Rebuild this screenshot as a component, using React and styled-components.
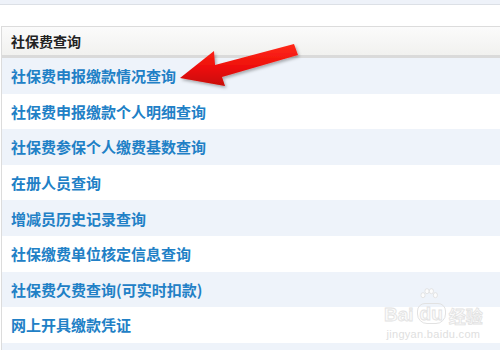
import styled, { createGlobalStyle } from 'styled-components';

const GlobalStyle = createGlobalStyle`
  html, body {
    margin: 0;
    padding: 0;
    background: #fff;
    overflow: hidden;
  }
  body {
    font-family: "Noto Sans CJK SC", "Noto Sans", sans-serif;
  }
`;

const links = [
  '社保费申报缴款情况查询',
  '社保费申报缴款个人明细查询',
  '社保费参保个人缴费基数查询',
  '在册人员查询',
  '增减员历史记录查询',
  '社保缴费单位核定信息查询',
  '社保费欠费查询(可实时扣款)',
  '网上开具缴款凭证',
  '',
];

function App() {
  return (
    <>
      <GlobalStyle />
      <StPage>
        <StTopStrip />
        <StPanel>
          <StHeader>社保费查询</StHeader>
          <StList>
            {links.map((text, i) => (
              <StRow key={i} striped={i % 2 === 0}>
                {text && <StLink href="#">{text}</StLink>}
              </StRow>
            ))}
          </StList>
        </StPanel>
        <StArrow width="130" height="50" viewBox="178 42 130 50">
          <defs>
            <linearGradient id="arrowFill" x1="0" y1="0" x2="0" y2="1">
              <stop offset="0" stopColor="#ff2a1a" />
              <stop offset="0.55" stopColor="#ee0f0a" />
              <stop offset="1" stopColor="#c80806" />
            </linearGradient>
            <filter id="arrowShadow" x="-10%" y="-20%" width="130%" height="160%">
              <feDropShadow dx="1.5" dy="2" stdDeviation="1.5" floodColor="#000" floodOpacity="0.3" />
            </filter>
          </defs>
          <polygon
            points="180,78 214,51 215,65 294,44 298,55 222,77 225,86"
            fill="url(#arrowFill)"
            filter="url(#arrowShadow)"
          />
        </StArrow>
        <StWatermark>
          <StMarkTop>
            <span>Bai</span>
            <StDuWrap>
              <StPaw viewBox="0 0 24 20">
                <ellipse cx="4.5" cy="9" rx="2.6" ry="3.2" />
                <ellipse cx="9.5" cy="4" rx="2.6" ry="3.2" />
                <ellipse cx="15" cy="4" rx="2.6" ry="3.2" />
                <ellipse cx="20" cy="9" rx="2.6" ry="3.2" />
              </StPaw>
              <StMarkDu>du</StMarkDu>
            </StDuWrap>
            <StMarkCn>经验</StMarkCn>
          </StMarkTop>
          <StMarkUrl>jingyan.baidu.com</StMarkUrl>
        </StWatermark>
      </StPage>
    </>
  );
}

export default App;

const StPage = styled.div`
  position: relative;
  width: 500px;
  height: 350px;
  overflow: hidden;
`;

const StTopStrip = styled.div`
  height: 4px;
  background-color: #eef2f9;
  border-bottom: 1px solid #dce0e6;
  margin-bottom: 21px;
`;

const StPanel = styled.div`
  margin-left: 1px;
  border: 1px solid #dcdcdc;
  border-right: none;
  border-bottom: none;
`;

const StHeader = styled.div`
  height: 28px;
  display: flex;
  align-items: center;
  padding-left: 9px;
  font-size: 14px;
  font-weight: 700;
  color: #222;
  background: linear-gradient(#fbfbfb, #f1f1ef);
  border-bottom: 3px solid #dadada;
`;

const StList = styled.div`
  display: flex;
  flex-direction: column;
`;

const StRow = styled.div`
  height: 35.6px;
  box-sizing: border-box;
  display: flex;
  align-items: center;
  padding-left: 9px;
  background-color: ${({ striped }) => (striped ? '#eef3fa' : '#ffffff')};
`;

const StLink = styled.a`
  font-size: 15px;
  font-weight: 700;
  color: #2180c6;
  text-decoration: none;
`;

const StArrow = styled.svg`
  position: absolute;
  left: 178px;
  top: 42px;
  overflow: visible;
`;

const StWatermark = styled.div`
  position: absolute;
  left: 384px;
  top: 303px;
  display: flex;
  flex-direction: column;
  align-items: center;
  pointer-events: none;
`;

const StMarkTop = styled.div`
  display: flex;
  align-items: flex-end;
  gap: 3px;
  font-family: "Liberation Sans", sans-serif;
  font-size: 19px;
  font-weight: 700;
  color: #fbfbfb;
  -webkit-text-stroke: 0.8px #e2e2e2;
  line-height: 1;
`;

const StDuWrap = styled.span`
  position: relative;
  display: flex;
  justify-content: center;
`;

const StPaw = styled.svg`
  position: absolute;
  left: 1px;
  top: -15px;
  width: 22px;
  height: 16px;
  fill: #fcfcfc;
  stroke: #dedede;
  stroke-width: 1;
`;

const StMarkDu = styled.span`
  padding: 0 2px;
  border: 1px solid #e2e2e2;
  border-radius: 8px 8px 10px 10px;
  -webkit-text-stroke: 0.8px #e2e2e2;
`;

const StMarkCn = styled.span`
  font-family: "Noto Sans CJK SC", sans-serif;
  font-size: 17px;
`;

const StMarkUrl = styled.div`
  margin-top: 4px;
  font-family: "Liberation Sans", sans-serif;
  font-size: 11px;
  color: #e0e0e0;
  letter-spacing: 0.3px;
`;
